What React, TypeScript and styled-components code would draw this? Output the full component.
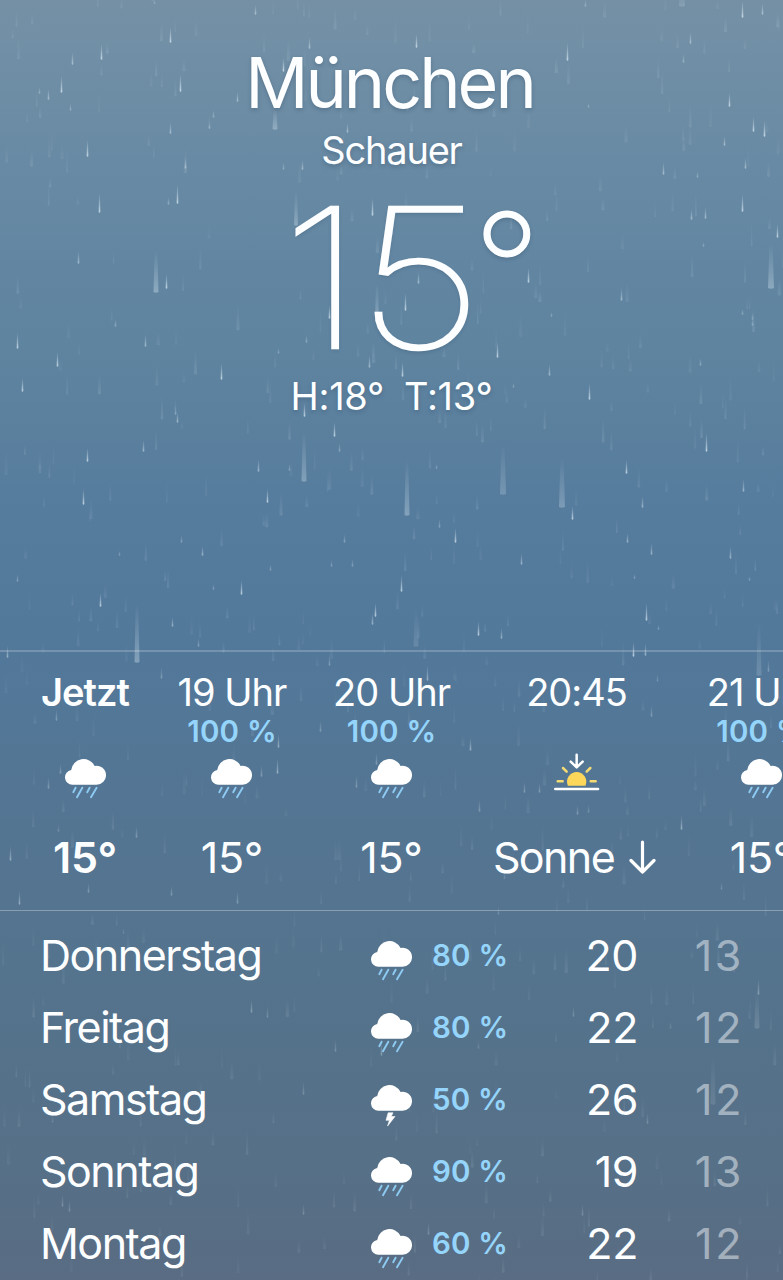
import React from "react";
import styled, { createGlobalStyle } from "styled-components";

const GlobalStyle = createGlobalStyle`
  *, *::before, *::after { box-sizing: border-box; }
  body {
    margin: 0;
    font-family: Inter, "Noto Sans", sans-serif;
    color: #fdfeff;
    -webkit-font-smoothing: antialiased;
  }
`;

const Screen = styled.main`
  position: relative;
  width: 783px;
  height: 1280px;
  overflow: hidden;
  white-space: nowrap;
  background: linear-gradient(
    180deg,
    #7590a5 0px,
    #708fa6 60px,
    #698aa4 160px,
    #6286a2 270px,
    #5f84a0 350px,
    #5b809e 430px,
    #577d9e 490px,
    #547a9c 560px,
    #52789a 640px,
    #537797 720px,
    #547593 800px,
    #54748f 920px,
    #55728b 1040px,
    #567087 1170px,
    #596c83 1280px
  );
`;

const RainLayer = styled.svg`
  position: absolute;
  inset: 0;
`;

const Content = styled.div`
  position: relative;
  display: flex;
  flex-direction: column;
`;

const Header = styled.header`
  display: flex;
  flex-direction: column;
  align-items: center;
  height: 650px;
  padding-top: 43px;
  text-shadow: 0 2px 4px rgba(30, 55, 80, 0.28);
`;

const City = styled.h1`
  margin: 0 4px 0 0;
  font-size: 70px;
  line-height: 80px;
  font-weight: 400;
  letter-spacing: -3px;
`;

const Condition = styled.p`
  margin: 8px 0 0;
  font-size: 38px;
  line-height: 38px;
  font-weight: 400;
  letter-spacing: -1.2px;
`;

const Temperature = styled.p`
  display: flex;
  align-self: flex-start;
  margin: 19px 0 0 281px;
  line-height: 180px;
`;

const Digits = styled.span`
  width: 192px;
  font-size: 194px;
  font-weight: 100;
  letter-spacing: -5px;
  -webkit-text-stroke: 2.4px #fdfeff;
  transform: scaleX(1.15);
  transform-origin: left;
`;

const DegreeSign = styled.span`
  margin-top: -11px;
  font-size: 149px;
  font-weight: 200;
  -webkit-text-stroke: 1.1px #fdfeff;
`;

const Range = styled.p`
  display: flex;
  gap: 20px;
  margin: 8px 0 0;
  font-size: 38px;
  line-height: 40px;
  font-weight: 400;
  letter-spacing: -0.3px;
`;

const Hours = styled.section`
  display: grid;
  grid-template-columns: 88px 114px 113px 165px 112px;
  column-gap: 46px;
  width: 783px;
  height: 261px;
  padding: 20px 0 0 41px;
  overflow: hidden;
  border-top: 2px solid rgba(255, 255, 255, 0.2);
  border-bottom: 1px solid rgba(255, 255, 255, 0.3);
`;

const Hour = styled.div<{ $now?: boolean }>`
  display: grid;
  grid-template-rows: 41px 36px 60px 1fr;
  justify-items: center;
  justify-content: center;
  align-content: start;
  height: 210px;
  font-weight: ${(p) => (p.$now ? 600 : 400)};
`;

const HourLabel = styled.span`
  font-size: 38px;
  line-height: 40px;
  letter-spacing: -1px;
`;

const Chance = styled.span`
  color: #95d5fb;
  font-size: 29.5px;
  line-height: 36px;
  font-weight: 600;
  letter-spacing: 0.2px;
`;

const HourIcon = styled.span<{ $raised?: boolean }>`
  display: flex;
  align-items: center;
  height: 60px;
  padding-bottom: ${(p) => (p.$raised ? 14 : 0)}px;
`;

const HourValue = styled.span<{ $wide?: boolean }>`
  display: flex;
  align-items: center;
  gap: 15px;
  font-size: 43px;
  line-height: 52px;
  letter-spacing: ${(p) => (p.$wide ? -1.6 : -0.3)}px;
  margin: 22px ${(p) => (p.$wide ? 4 : 0)}px 0 0;
`;

const Days = styled.section`
  display: flex;
  flex-direction: column;
  padding: 8px 42px 0 41px;
`;

const Day = styled.div`
  display: grid;
  grid-template-columns: 330px 61px 1fr 90px 103px;
  align-items: center;
  height: 72px;
  font-size: 43px;
  line-height: 52px;
  font-weight: 400;
`;

const DayName = styled.span`
  margin-left: -1px;
  letter-spacing: -1.5px;
`;

const DayIcon = styled.span`
  display: flex;
  padding-top: 12px;
`;

const Degree = styled.span<{ $low?: boolean }>`
  text-align: right;
  letter-spacing: ${(p) => (p.$low ? 2.6 : -0.4)}px;
  margin-right: ${(p) => (p.$low ? -3 : 0)}px;
  opacity: ${(p) => (p.$low ? 0.46 : 1)};
`;

type Sky = "rain" | "storm" | "sunset";

const CLOUD =
  "M7.4 26.7A7.4 7.4 0 0 1 6.2 12A12.4 12.4 0 0 1 29.6 7.9A9.5 9.5 0 1 1 31.2 26.7Z";

function SkyIcon({ sky }: { sky: Sky }) {
  if (sky === "sunset") {
    return (
      <svg width="47" height="38" viewBox="220 339 141 114" fill="none" strokeLinecap="round">
        <path d="M291 344V381M273 365L291 382L309 365" stroke="#fff" strokeWidth="7.500" strokeLinejoin="round" />
        <path d="M264.500 437A29 29 0 1 1 317.500 437Z" fill="#fcd75a" />
        <path d="M234 424H249M333 424H348M250 384L261 395M332 384L321 395" stroke="#f3da73" strokeWidth="7.500" />
        <path d="M227 447H355" stroke="#fff" strokeWidth="8" />
      </svg>
    );
  }
  return (
    <svg width="41" height="42" viewBox="0 0 41 42" fill="none">
      <path d={CLOUD} fill="#fff" />
      {sky === "rain" ? (
        <path
          d="M10.600 29.700L8.300 34.200M17.300 29.700L12 39.200M24.600 29.700L22.200 34.200M31.600 29.700L26 39.200"
          stroke="#8ecbf2"
          strokeWidth="1.900"
          strokeLinecap="round"
        />
      ) : (
        <path d="M17.200 28.800H22L20.200 32.500H24L16.600 42L18.400 36.300H15Z" fill="#fff" stroke="#fff" strokeWidth="0.600" strokeLinejoin="round" />
      )}
    </svg>
  );
}

function DownArrow() {
  return (
    <svg width="27" height="34" viewBox="0 0 27 34" fill="none">
      <path d="M13.500 2V32M2 20.500L13.500 32L25 20.500" stroke="#fff" strokeWidth="3.200" strokeLinecap="round" strokeLinejoin="round" />
    </svg>
  );
}

/* x, y of the lower end, length */
const DROPS = [
  [154,4,4],[170,43,16],[101,60,16],[72,65,13],[61,93,17],[48,100,11],[39,94,7],[70,111,8],[180,92,18],[170,134,12],
  [87,157,17],[185,169,11],[177,204,20],[168,205,8],[99,213,20],[78,264,13],[166,289,15],[255,15,10],[237,102,10],
  [209,129,7],[213,118,8],[309,49,12],[416,48,14],[283,72,14],[438,78,10],[347,133,10],[283,170,8],[302,170,10],
  [372,216,18],[418,284,12],[405,311,18],[528,283,15],[329,319,14],[306,343,8],[497,358,16],[549,376,12],[402,377,15],
  [369,368,13],[513,388,5],[551,317,5],[304,417,14],[585,7,7],[742,18,17],[762,15,12],[567,61,18],[690,44,12],
  [683,63,9],[729,107,14],[753,132,15],[764,137,17],[724,146,10],[745,169,11],[663,175,13],[697,178,7],[742,212,18],
  [705,219,12],[691,220,11],[777,238,14],[703,247,5],[621,301,13],[588,108,5],[742,315,6],[752,320,7],[17,349,16],
  [57,367,15],[22,392,14],[145,347,13],[221,380,17],[177,423,11],[175,415,9],[143,452,12],[87,462,14],[83,505,16],
  [267,503,14],[258,472,13],[289,471,7],[334,437,15],[339,452,9],[181,543,8],[202,556,10],[119,556,5],[241,595,15],
  [213,590,6],[270,571,7],[100,607,14],[17,582,8],[344,543,9],[331,567,7],[352,567,8],[375,617,14],[372,625,12],
  [172,627,10],[198,647,9],[115,327,8],[278,354,6],[589,400,17],[700,366,8],[752,326,7],[706,452,19],[626,474,14],
  [642,508,12],[743,492,13],[572,520,14],[436,469,5],[455,543,15],[439,528,9],[521,565,12],[651,555,12],[730,559,13],
  [627,543,10],[401,592,17],[634,579,5],[749,581,5],[646,621,18],[658,630,5],[478,636,15],[501,639,11],[633,657,15],
  [645,656,13],[7,658,12],[161,679,12],[56,721,12],[278,748,14],[277,774,16],[261,777,12],[48,789,12],[60,774,10],
  [58,832,7],[10,861,15],[171,896,10],[237,904,13],[19,905,14],[88,893,10],[136,838,12],[329,666,11],[427,681,16],
  [470,751,14],[356,788,13],[376,765,12],[479,812,12],[524,793,11],[539,793,10],[498,915,9],[320,732,11],[504,879,6],
  [651,717,12],[657,682,9],[577,815,10],[588,813,9],[681,830,15],[721,890,8],[768,672,12],[251,1013,14],[267,1018,12],
  [335,1052,12],[303,1095,13],[52,1123,8],[62,1207,13],[69,1212,12],[303,1215,11],[123,934,6],[573,1017,11],
  [670,1029,8],[381,1056,14],[647,1124,11],[758,995,16],[428,1235,13],[582,1216,12],[478,1049,8],
];

/* x, y of the lower end, length, width, opacity */
const STREAKS = [
  [156,293,42,5,0.34],[275,130,22,5,0.32],[296,226,35,4,0.3],[377,322,38,4,0.3],[771,289,45,6,0.32],[682,7,20,6,0.16],
  [304,482,50,5,0.3],[137,663,60,5,0.34],[407,516,56,5,0.32],[503,495,50,6,0.22],[562,508,50,6,0.26],[416,647,40,5,0.14],
  [759,676,55,5,0.18],[757,1029,40,5,0.16],[713,1105,50,5,0.12],
];

function makeMist(count: number) {
  let seed = 4177;
  const next = () => {
    seed = (seed * 16807) % 2147483647;
    return seed / 2147483647;
  };
  return Array.from({ length: count }, () => [next() * 783, next() * 1290, 10 + next() * 16, 1.5 + next() * 2, 0.05 + next() * 0.08]);
}

const MIST = makeMist(560);

function streak(x: number, y: number, length: number, width: number) {
  const h = width / 2;
  return `M${x - h * 0.5} ${y - length}H${x + h * 0.5}L${x + h} ${y - 1}Q${x} ${y + 0.6} ${x - h} ${y - 1}Z`;
}

function Rain() {
  return (
    <RainLayer width="783" height="1280" viewBox="0 0 783 1280" aria-hidden="true">
      <defs>
        <linearGradient id="fall" x1="0" y1="0" x2="0" y2="1">
          <stop offset="0" stopColor="#e4f2fa" stopOpacity="0" />
          <stop offset="1" stopColor="#e4f2fa" />
        </linearGradient>
      </defs>
      {MIST.map(([x, y, l, w, o], i) => (
        <path key={`m${i}`} d={streak(x, y, l, w)} fill="url(#fall)" opacity={o * (y > 660 ? 0.8 : 1)} />
      ))}
      {DROPS.map(([x, y, l], i) => (
        <path
          key={`d${i}`}
          d={streak(x + 0.5, y, l, 1.7)}
          fill="url(#fall)"
          opacity={(l > 13 ? 0.72 : l > 9 ? 0.5 : 0.36) * (y > 920 ? 0.5 : y > 660 ? 0.65 : 1)}
        />
      ))}
      {STREAKS.map(([x, y, l, w, o], i) => (
        <path key={`s${i}`} d={streak(x, y, l, w)} fill="url(#fall)" opacity={o} />
      ))}
    </RainLayer>
  );
}

const HOURS: { label: string; chance?: string; sky: Sky; value: string; now?: boolean; arrow?: boolean }[] = [
  { label: "Jetzt", sky: "rain", value: "15°", now: true },
  { label: "19 Uhr", chance: "100 %", sky: "rain", value: "15°" },
  { label: "20 Uhr", chance: "100 %", sky: "rain", value: "15°" },
  { label: "20:45", sky: "sunset", value: "Sonne", arrow: true },
  { label: "21 Uhr", chance: "100 %", sky: "rain", value: "15°" },
];

const DAYS: { name: string; sky: Sky; chance: string; high: number; low: number }[] = [
  { name: "Donnerstag", sky: "rain", chance: "80 %", high: 20, low: 13 },
  { name: "Freitag", sky: "rain", chance: "80 %", high: 22, low: 12 },
  { name: "Samstag", sky: "storm", chance: "50 %", high: 26, low: 12 },
  { name: "Sonntag", sky: "rain", chance: "90 %", high: 19, low: 13 },
  { name: "Montag", sky: "rain", chance: "60 %", high: 22, low: 12 },
];

export default function App() {
  return (
    <>
      <GlobalStyle />
      <Screen>
        <Rain />
        <Content>
          <Header>
            <City>München</City>
            <Condition>Schauer</Condition>
            <Temperature>
              <Digits>15</Digits>
              <DegreeSign>°</DegreeSign>
            </Temperature>
            <Range>
              <span>H:18°</span>
              <span>T:13°</span>
            </Range>
          </Header>
          <Hours>
            {HOURS.map((h) => (
              <Hour key={h.label} $now={h.now}>
                <HourLabel>{h.label}</HourLabel>
                <Chance>{h.chance}</Chance>
                <HourIcon $raised={h.sky === "sunset"}>
                  <SkyIcon sky={h.sky} />
                </HourIcon>
                <HourValue $wide={h.arrow}>
                  {h.value}
                  {h.arrow && <DownArrow />}
                </HourValue>
              </Hour>
            ))}
          </Hours>
          <Days>
            {DAYS.map((d) => (
              <Day key={d.name}>
                <DayName>{d.name}</DayName>
                <DayIcon>
                  <SkyIcon sky={d.sky} />
                </DayIcon>
                <Chance>{d.chance}</Chance>
                <Degree>{d.high}</Degree>
                <Degree $low>{d.low}</Degree>
              </Day>
            ))}
          </Days>
        </Content>
      </Screen>
    </>
  );
}
